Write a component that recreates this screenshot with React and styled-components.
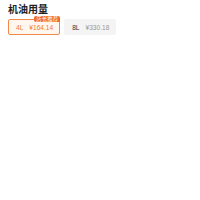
import React from 'react';
import styled, { createGlobalStyle } from 'styled-components';

const GlobalStyle = createGlobalStyle`
  body {
    margin: 0;
    background: #ffffff;
    font-family: "Noto Sans", "Noto Sans CJK SC", sans-serif;
  }
`;

const Section = styled.section`
  padding: 3px 8px;
`;

const Title = styled.h3`
  margin: 0;
  font-size: 10px;
  line-height: 11px;
  font-weight: 600;
  color: #222222;
  font-family: "Noto Sans CJK SC", sans-serif;
`;

const Options = styled.div`
  display: flex;
  gap: 4px;
  margin-top: 5px;
`;

const Chip = styled.div`
  position: relative;
  box-sizing: border-box;
  display: flex;
  align-items: center;
  gap: 6px;
  height: 16px;
  padding: 0 6px 0 7px;
  border-radius: 2px;
  border: 1px solid ${(p) => (p.active ? '#f0894a' : '#f4f4f4')};
  background: ${(p) => (p.active ? '#fff6f0' : '#f4f4f4')};
  font-size: 6.6px;
  font-family: "Liberation Sans", "Noto Sans CJK SC", sans-serif;
`;

const Volume = styled.span`
  color: ${(p) => (p.active ? '#f07a30' : '#333333')};
`;

const Price = styled.span`
  color: ${(p) => (p.active ? '#f07a30' : '#999999')};
`;

const Badge = styled.span`
  position: absolute;
  top: -4px;
  right: -1px;
  padding: 0 2px;
  height: 6px;
  line-height: 6px;
  font-size: 5.5px;
  color: #ffffff;
  background: #f26b22;
  border-radius: 2px 2px 0 2px;
  font-family: "Noto Sans CJK SC", sans-serif;
`;

const options = [
  { volume: '4L', price: '¥164.14', active: true, badge: '店长推荐' },
  { volume: '8L', price: '¥330.18', active: false },
];

export default function App() {
  return (
    <>
      <GlobalStyle />
      <Section>
        <Title>机油用量</Title>
        <Options>
          {options.map((o) => (
            <Chip key={o.volume} active={o.active}>
              {o.badge && <Badge>{o.badge}</Badge>}
              <Volume active={o.active}>{o.volume}</Volume>
              <Price active={o.active}>{o.price}</Price>
            </Chip>
          ))}
        </Options>
      </Section>
    </>
  );
}
